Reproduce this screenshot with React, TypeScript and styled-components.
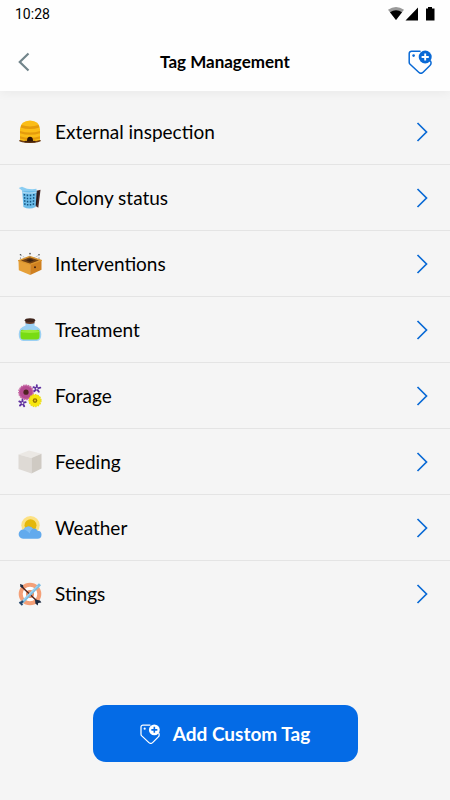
import React from "react";
import styled, { createGlobalStyle } from "styled-components";

const GlobalStyle = createGlobalStyle`
  *, *::before, *::after { box-sizing: border-box; }
  body { margin: 0; background: #f5f5f5; color: #000; font-family: Lato, "Liberation Sans", sans-serif; }
  button { font: inherit; color: inherit; border: 0; margin: 0; padding: 0; background: none; cursor: pointer; }
  svg { display: block; flex: none; }
`;

const Screen = styled.div`
  display: flex;
  flex-direction: column;
  min-height: 100vh;
`;

const Top = styled.header`
  background: #fefefe;
  box-shadow: 0 2px 10px rgba(0, 0, 0, 0.05);
`;

const StatusBar = styled.div`
  display: flex;
  align-items: center;
  justify-content: space-between;
  height: 28px;
  padding: 0 15px 0 15px;
  font: 400 14px/28px Roboto, sans-serif;
`;

const TitleBar = styled.div`
  display: grid;
  grid-template-columns: 56px 1fr 56px;
  align-items: center;
  height: 63px;
  padding-top: 5px;
`;

const Title = styled.h1`
  margin: 0;
  text-align: center;
  font-size: 17px;
  line-height: 24px;
  font-weight: 700;
`;

const IconButton = styled.button<{ $end?: boolean }>`
  display: flex;
  align-items: center;
  justify-content: ${(p) => (p.$end ? "flex-end" : "flex-start")};
  height: 56px;
  padding: 0 18px;
`;

const List = styled.ul`
  list-style: none;
  margin: 8px 0 0;
  padding: 0;
`;

const Item = styled.li`
  &:not(:last-child) { border-bottom: 1px solid #e4e4e4; }
`;

const Row = styled.button`
  display: flex;
  align-items: center;
  width: 100%;
  height: 65px;
  padding: 0 21px 0 18px;
  gap: 13px;
  text-align: left;
  font-size: 19px;
  line-height: 28px;
`;

const Label = styled.span`
  flex: 1;
`;

const Footer = styled.footer`
  display: flex;
  justify-content: center;
  margin-top: auto;
  padding: 24px 16px 38px;
`;

const AddButton = styled.button`
  display: flex;
  align-items: center;
  justify-content: center;
  gap: 13px;
  min-width: 265px;
  height: 57px;
  border-radius: 13px;
  background: #046be6;
  color: #fff;
  font-size: 19px;
  line-height: 28px;
  font-weight: 700;
`;

function TagPlus({ size, fill, plus }: { size: number; fill: string; plus: string }) {
  return (
    <svg width={size} height={size} viewBox="0 0 24 24" fill="none" aria-hidden="true">
      <path
        d="M12 1.2H3.6a2.4 2.4 0 0 0-2.4 2.4v8.600c0 .8.3 1.5.9 2.100l8.6 8a3.200 3.200 0 0 0 4.400 0l6.600-6.500a4 4 0 0 0 .8-4.800"
        stroke={fill}
        strokeWidth="1.5"
        strokeLinecap="round"
      />
      <circle cx="5.600" cy="5.600" r="1.300" fill={fill} />
      <circle cx="17.200" cy="7" r="6.500" fill={fill} />
      <path d="M17.200 3.400v7.200M13.600 7h7.200" stroke={plus} strokeWidth="1.900" />
    </svg>
  );
}

const Art = ({ children }: { children: React.ReactNode }) => (
  <svg width="24" height="24" viewBox="0 0 24 24" aria-hidden="true">
    {children}
  </svg>
);

const Hive = () => (
  <Art>
    <ellipse cx="12" cy="20.8" rx="11" ry="2.2" fill="#6d3c10" />
    <path d="M2 20V9Q2.500 1 12 .6 21.500 1 22 9v11q-10 3-20 0Z" fill="#fbbd17" />
    <path d="M3.500 5q8.500 2.800 17 0l1 2.400q-9.500 3-19 0ZM2 11q10 3 20 0v2.200q-10 3-20 0ZM2 16.200q10 3.200 20 0v2.200q-10 3-20 0Z" fill="#e49b0c" />
    <path d="M9 21q0-4.200 3-4.200t3 4.200Z" fill="#2d1406" />
    <path d="M6.500 20.800h11v1.700h-11Z" fill="#462109" />
  </Art>
);

const Smoker = () => (
  <Art>
    <path d="m17.500 5 5-1.300-2.200 18-3.600-2.200Z" fill="#4b2a27" />
    <path d="m20.300 5-1.800 14" stroke="#24181b" strokeWidth="1.200" />
    <path d="M.7 2.100 4 .7q7 3.600 14.500 2.100v3H5Q3.400 3.600.7 2.100Z" fill="#8acdf2" />
    <path d="M4.200 5h14.400l-1 16q-6.100 3-12.200 0Z" fill="#6dbdea" />
    <path d="M4.400 6.200q7 1.800 14 0" fill="none" stroke="#add9f1" strokeWidth="1.200" />
    <g stroke="#155581" strokeWidth="1.500" strokeDasharray="1.600 1.500">
      <path d="m6.400 8 .6 12M9.400 8.600l.3 12M12.500 8.600v12M15.800 8l-.5 12" />
    </g>
  </Art>
);

const Crate = () => (
  <Art>
    <path d="m.5 8.700 11.200-4.100L23.500 8.300 12.200 13Z" fill="#704014" />
    <path d="m.5 8.700 11.700 3.400v11L.8 18.300Z" fill="#e6a038" />
    <path d="M23.500 8.300v9.500l-11.300 5.300v-11Z" fill="#cf8020" />
    <path d="m1 8.700 10.700-4.100L23 8.300 12.200 12.300Z" fill="none" stroke="#dc962e" strokeWidth="1.400" />
    <path d="m8 8.300 4-1.500 4 1.400-4 1.800Z" fill="#3d2410" />
    <circle cx="17" cy="15.300" r="1" fill="#43210e" />
    <path d="m7.500 6-5-3M16 6l5-3M12 5V1.800" stroke="#8c8d8d" strokeWidth=".7" strokeDasharray="1 1" />
    <g fill="#4b5054">
      <circle cx="2.500" cy="2.700" r=".8" />
      <circle cx="12" cy="1.500" r=".8" />
      <circle cx="21" cy="2.700" r=".8" />
      <circle cx="2.500" cy="6" r=".6" />
      <circle cx="21" cy="6" r=".6" />
    </g>
  </Art>
);

const Flask = () => (
  <Art>
    <path d="M7.500 4h9v3.400q6.800 2.400 6.800 8.600 0 7-4.500 7H5.200Q.7 23 .7 16 .7 9.800 7.500 7.400Z" fill="#9bd0f3" />
    <path d="M2.500 14q0-2.200 2-2.200 7.500 1.800 15 0 2 0 2 2.200v4.400q0 3-3 3h-13q-3 0-3-3Z" fill="#78dc13" />
    <ellipse cx="12" cy="13.400" rx="9.200" ry="1.700" fill="#9cec3b" />
    <path d="M7.500 2h9v3.200q-4.500 1.500-9 0Z" fill="#6d3c28" />
    <ellipse cx="12" cy="2.300" rx="5.200" ry="2" fill="#3f241b" />
  </Art>
);

const Flowers = () => (
  <Art>
    <circle cx="8" cy="8.300" r="7" fill="#b64b91" />
    <circle cx="8" cy="8.300" r="7" fill="none" stroke="#c76aa6" strokeWidth="1.800" strokeDasharray="1.500 .8" />
    <circle cx="8" cy="8.200" r="2.600" fill="#502323" />
    <path
      d="M18.800 4.700V1.200M18.800 4.700l3.500-1M18.800 4.700l2 3M18.800 4.700l-2.600 2.500M18.800 4.700 15.500 3.200M4.500 19v-3.300M4.500 19l3.200-.8M4.500 19l1.700 3.200M4.500 19 2 21.500M4.500 19l-3.200-1.600"
      stroke="#6132a0"
      strokeWidth="1.900"
      strokeLinecap="round"
    />
    <circle cx="18.800" cy="4.700" r=".9" fill="#eee" />
    <circle cx="4.500" cy="19" r=".9" fill="#eee" />
    <circle cx="17" cy="16.600" r="6" fill="#f8e710" />
    <circle cx="17" cy="16.600" r="6" fill="none" stroke="#eadc18" strokeWidth="1.300" strokeDasharray="1.500 1" />
    <circle cx="17" cy="16.600" r="2.300" fill="#947300" />
    <circle cx="17" cy="16.600" r="1" fill="#e7c719" />
  </Art>
);

const Sugar = () => (
  <Art>
    <path d="M.5 4.500 11 .5l12.500 3.300L13.500 8Z" fill="#ebe8e4" />
    <path d="M.5 4.500 13.500 8v15.500L.5 19Z" fill="#dedad5" />
    <path d="M23.500 3.800V18.500l-10 5V8Z" fill="#cfcac3" />
  </Art>
);

const CloudSun = () => (
  <Art>
    <circle cx="12.500" cy="9.300" r="9.200" fill="#fce183" />
    <circle cx="12.500" cy="9.300" r="6" fill="#e4b80b" />
    <path d="M5 22.800a4.600 4.600 0 1 1 .5-9.200 5.500 5.500 0 0 1 9.500-.8q3-1.300 4.500 2a4 4 0 0 1 0 8Z" fill="#62aaed" />
    <path d="M5.500 13.600a5.500 5.500 0 0 1 9.500-.8q-2.800 1-3.200 4.600-3.800-3.600-6.300-3.800Z" fill="#7fbdf3" />
  </Art>
);

const StingTarget = () => (
  <Art>
    <circle cx="12" cy="12" r="9.300" fill="#fff" stroke="#f4a078" strokeWidth="4" />
    <circle cx="12" cy="12" r="4" fill="#ef9163" />
    <path d="m3 4 16.500 15.500" stroke="#50251e" strokeWidth="1.500" />
    <path d="m2 2 3 1 .5 3-3-1ZM17 17.500l5 1 1.400 2-3.200.6-.5 2.300-2.300-2Z" fill="#1c2940" />
    <path d="M4 20.500 22 2.300" stroke="#7cbde2" strokeWidth="3" />
    <path d="m4.700 18.800 15-15" stroke="#b7dff4" strokeWidth="1" />
    <path d="m1.500 20 3 3M2.500 21.500l2.500-2.500" stroke="#23476d" strokeWidth="2" />
  </Art>
);

const categories = [
  { label: "External inspection", Icon: Hive },
  { label: "Colony status", Icon: Smoker },
  { label: "Interventions", Icon: Crate },
  { label: "Treatment", Icon: Flask },
  { label: "Forage", Icon: Flowers },
  { label: "Feeding", Icon: Sugar },
  { label: "Weather", Icon: CloudSun },
  { label: "Stings", Icon: StingTarget },
];

export default function App() {
  return (
    <Screen>
      <GlobalStyle />
      <Top>
        <StatusBar>
          <span>10:28</span>
          <svg width="47" height="14" viewBox="0 0 47 14" aria-hidden="true">
            <path d="M0 2.800Q8-2.800 16 2.800L8 13Z" fill="#999" />
            <path d="M2 5.300q6-4 12 0L8 13Z" />
            <path d="M17.500 13.500 30 .5v13ZM38 1.500h2V0h4v1.500h2.500v12H38Z" />
          </svg>
        </StatusBar>
        <TitleBar>
          <IconButton aria-label="Back">
            <svg width="12" height="20" viewBox="0 0 12 20" fill="none" stroke="#72858b" strokeWidth="2.200" aria-hidden="true">
              <path d="M10.500 1.500 1.800 10l8.700 8.500" />
            </svg>
          </IconButton>
          <Title>Tag Management</Title>
          <IconButton $end aria-label="Add tag">
            <TagPlus size={24} fill="#0969d5" plus="#fff" />
          </IconButton>
        </TitleBar>
      </Top>
      <main>
        <List>
          {categories.map(({ label, Icon }) => (
            <Item key={label}>
              <Row>
                <Icon />
                <Label>{label}</Label>
                <svg width="14" height="20" viewBox="0 0 14 20" fill="none" stroke="#0969d5" strokeWidth="1.700" aria-hidden="true">
                  <path d="m2.500 1 9 9-9 9" />
                </svg>
              </Row>
            </Item>
          ))}
        </List>
      </main>
      <Footer>
        <AddButton>
          <TagPlus size={20} fill="#fff" plus="#046be6" />
          Add Custom Tag
        </AddButton>
      </Footer>
    </Screen>
  );
}
